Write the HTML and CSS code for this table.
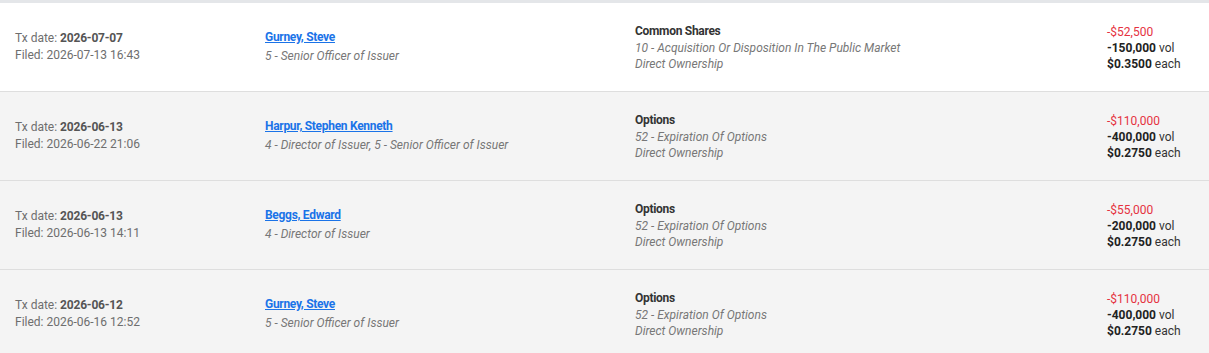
FILE: index.html
```html
<!DOCTYPE html>
<html>
<head>
<meta charset="utf-8">
<link rel="stylesheet" href="styles.css">
</head>
<body>
<div class="list">
  <div class="row white">
    <div class="cell dates"><div>Tx date: <b>2026-07-07</b></div><div>Filed: 2026-07-13 16:43</div></div>
    <div class="cell who"><div><a href="#">Gurney, Steve</a></div><div class="it">5 - Senior Officer of Issuer</div></div>
    <div class="cell sec"><div class="title">Common Shares</div><div class="it">10 - Acquisition Or Disposition In The Public Market</div><div class="it">Direct Ownership</div></div>
    <div class="cell amt"><div class="neg">-$52,500</div><div><b>-150,000</b> vol</div><div><b>$0.3500</b> each</div></div>
  </div>
  <div class="row">
    <div class="cell dates"><div>Tx date: <b>2026-06-13</b></div><div>Filed: 2026-06-22 21:06</div></div>
    <div class="cell who"><div><a href="#">Harpur, Stephen Kenneth</a></div><div class="it">4 - Director of Issuer, 5 - Senior Officer of Issuer</div></div>
    <div class="cell sec"><div class="title">Options</div><div class="it">52 - Expiration Of Options</div><div class="it">Direct Ownership</div></div>
    <div class="cell amt"><div class="neg">-$110,000</div><div><b>-400,000</b> vol</div><div><b>$0.2750</b> each</div></div>
  </div>
  <div class="row">
    <div class="cell dates"><div>Tx date: <b>2026-06-13</b></div><div>Filed: 2026-06-13 14:11</div></div>
    <div class="cell who"><div><a href="#">Beggs, Edward</a></div><div class="it">4 - Director of Issuer</div></div>
    <div class="cell sec"><div class="title">Options</div><div class="it">52 - Expiration Of Options</div><div class="it">Direct Ownership</div></div>
    <div class="cell amt"><div class="neg">-$55,000</div><div><b>-200,000</b> vol</div><div><b>$0.2750</b> each</div></div>
  </div>
  <div class="row">
    <div class="cell dates"><div>Tx date: <b>2026-06-12</b></div><div>Filed: 2026-06-16 12:52</div></div>
    <div class="cell who"><div><a href="#">Gurney, Steve</a></div><div class="it">5 - Senior Officer of Issuer</div></div>
    <div class="cell sec"><div class="title">Options</div><div class="it">52 - Expiration Of Options</div><div class="it">Direct Ownership</div></div>
    <div class="cell amt"><div class="neg">-$110,000</div><div><b>-400,000</b> vol</div><div><b>$0.2750</b> each</div></div>
  </div>
</div>
</body>
</html>
```
FILE: styles.css
```css
html, body {
  margin: 0;
  padding: 0;
  background: #f4f4f4;
}
body {
  font-family: Roboto, "Liberation Sans", Arial, sans-serif;
  font-size: 12px;
  line-height: 17px;
  color: #6e6e6e;
}
.list {
  border-top: 3px solid #e4e6e9;
}
.row {
  display: grid;
  grid-template-columns: 250px 370px 472px 1fr;
  padding-left: 15px;
  height: 88px;
  align-items: center;
  border-bottom: 1px solid #dedede;
  background: #f4f4f4;
}
.row.white {
  background: #ffffff;
}
.dates b {
  color: #555;
  font-weight: bold;
  letter-spacing: -0.2px;
}
.who a {
  color: #1a73e8;
  font-weight: bold;
  letter-spacing: -0.3px;
  text-decoration: underline;
}
.it {
  font-style: italic;
  color: #777;
}
.who .it {
  margin-top: 2px;
}
.sec {
  line-height: 16px;
}
.title {
  font-weight: bold;
  letter-spacing: -0.3px;
  color: #333;
  margin-bottom: 1px;
}
.amt {
  color: #333;
  line-height: 16px;
  padding-top: 1px;
}
.amt b {
  color: #222;
}
.neg {
  color: #e5323f;
}
```
